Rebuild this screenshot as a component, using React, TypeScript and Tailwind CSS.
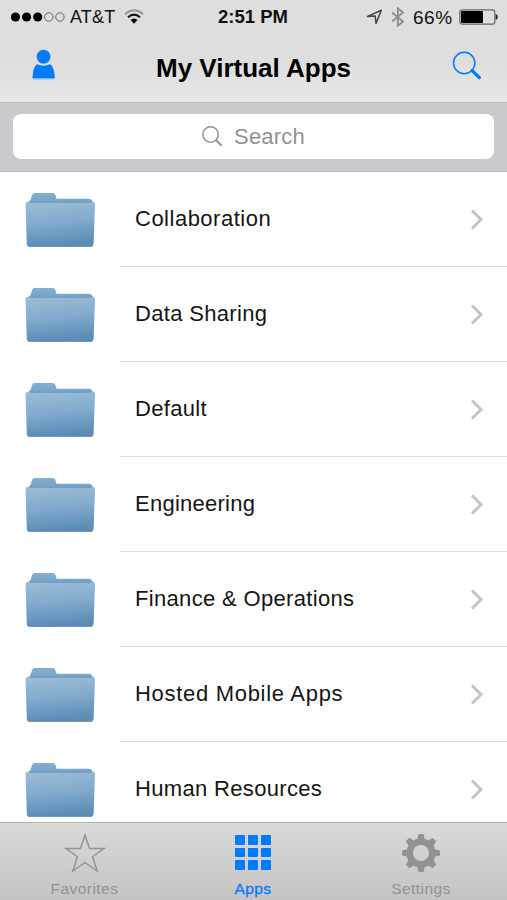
import type { ReactNode } from 'react'

const folders = [
  { name: 'Collaboration', tracking: 'tracking-[0.5px]' },
  { name: 'Data Sharing', tracking: 'tracking-[0.33px]' },
  { name: 'Default', tracking: 'tracking-[0.33px]' },
  { name: 'Engineering', tracking: 'tracking-[0.25px]' },
  { name: 'Finance & Operations', tracking: 'tracking-[0.33px]' },
  { name: 'Hosted Mobile Apps', tracking: 'tracking-[0.7px]' },
  { name: 'Human Resources', tracking: 'tracking-[0.33px]' },
]

const gearTeeth = [0, 45, 90, 135, 180, 225, 270, 315]

const gridCells = [0, 1, 2, 3, 4, 5, 6, 7, 8]

function FolderIcon() {
  return (
    <svg width="72" height="58" viewBox="0 0 72 58" className="shrink-0">
      <defs>
        <linearGradient id="folderFront" x1="0" y1="0" x2="0.15" y2="1">
          <stop offset="0" stopColor="#9dbdd6" />
          <stop offset="0.5" stopColor="#82abce" />
          <stop offset="1" stopColor="#5b8db8" />
        </linearGradient>
        <linearGradient id="folderBack" x1="0" y1="0" x2="0" y2="1">
          <stop offset="0" stopColor="#84afd1" />
          <stop offset="1" stopColor="#6999c0" />
        </linearGradient>
      </defs>
      <path d="M3 12 L6.5 9 L8 4.2 Q8.6 2 10.5 2 H29 Q31.2 2 31.6 4.5 L32.5 7.7 H65 Q67.3 7.7 68 9.5 L70 12 V18 H3Z" fill="url(#folderBack)" />
      <path d="M1.5 13 Q1.5 11 3.5 11 H68.8 Q71.2 11 71 13 L69.6 53 Q69.3 55.7 67 55.7 H5.5 Q3 55.7 2.8 53Z" fill="url(#folderFront)" />
      <path d="M6 11.3 H67" stroke="#6595bd" strokeWidth="0.9" />
      <path d="M4.5 55 H68.2" stroke="#6287a7" strokeWidth="1" />
    </svg>
  )
}

function StatusBar() {
  return (
    <div className="flex h-[34px] items-center text-[18px] leading-none text-[#111]">
      <svg width="54" height="12" viewBox="0 0 54 12" className="ml-[11px] shrink-0">
        <circle cx="4.5" cy="6" r="4.6" fill="#000" />
        <circle cx="15.6" cy="6" r="4.6" fill="#000" />
        <circle cx="26.7" cy="6" r="4.6" fill="#000" />
        <circle cx="37.8" cy="6" r="4.2" fill="none" stroke="#666" />
        <circle cx="48.9" cy="6" r="4.2" fill="none" stroke="#666" />
      </svg>
      <span className="ml-[5px] w-[54px] tracking-[0.2px]">AT&amp;T</span>
      <svg width="20" height="16" viewBox="0 0 20 16" className="shrink-0" fill="none">
        <path d="M1 5.2 Q10 -2.6 19 5.2" stroke="#999" strokeWidth="2" />
        <path d="M4 8.3 Q10 3 16 8.3" stroke="#111" strokeWidth="2.2" />
        <path d="M6.5 11 Q10 8 13.5 11 L10 14.7Z" fill="#000" />
      </svg>
      <span className="ml-[74px] w-[148px] text-[18.5px] font-bold">2:51 PM</span>
      <svg width="17" height="16" viewBox="0 0 17 16" className="shrink-0" fill="none">
        <path d="M1.5 7.4 L15.3 1.2 L10 14.5 L9.2 6.9Z" stroke="#444" strokeWidth="1.5" strokeLinejoin="round" />
      </svg>
      <svg width="14" height="20" viewBox="0 0 14 20" className="ml-[8px] shrink-0" fill="none">
        <path d="M1 5.5 L12 14.5 L6.8 18.8 V1.2 L12 5.5 L1 14.5" stroke="#8d8d8d" strokeWidth="1.8" />
      </svg>
      <span className="ml-[8px] w-[46px] text-[19px] tracking-[0.5px]">66%</span>
      <svg width="39" height="16" viewBox="0 0 39 16" className="shrink-0">
        <rect x="0.8" y="0.8" width="35" height="14.4" rx="2.2" fill="none" stroke="#666" strokeWidth="1.2" />
        <rect x="2" y="2" width="22" height="12" rx="1" fill="#000" />
        <path d="M36.6 5 Q38.8 5.5 38.8 8 Q38.8 10.5 36.6 11Z" fill="#222" />
      </svg>
    </div>
  )
}

function NavBar() {
  return (
    <div className="grid flex-1 grid-cols-[80px_1fr_80px] items-center pb-px">
      <svg width="24" height="32" viewBox="0 0 24 32" className="mb-[5px] ml-[32px]">
        <ellipse cx="11.6" cy="7.8" rx="6.9" ry="7" fill="#007aff" />
        <path d="M5 15.3 Q11.6 18 18.2 15.3 Q21.2 17.5 22.1 22.5 L23 29.6 H0.4 L1.2 22.5 Q2 17.5 5 15.3Z" fill="#007aff" />
        <path d="M1 30.5 H22.5" stroke="#a9d3f5" strokeWidth="1.4" />
      </svg>
      <h1 className="text-center text-[26px] leading-none font-bold whitespace-nowrap text-black">My Virtual Apps</h1>
      <svg width="30" height="30" viewBox="0 0 30 30" className="mb-[4px] ml-[25px]" fill="none" stroke="#007aff">
        <circle cx="12.2" cy="12" r="10.7" strokeWidth="1.5" />
        <path d="M20 19.5 L27.4 26.7" strokeWidth="3.2" strokeLinecap="round" />
      </svg>
    </div>
  )
}

function SearchBar() {
  return (
    <div className="h-[70px] shrink-0 border-y border-[#bdbdbe] bg-[#c9c9ce] px-[13px] pt-[11px]">
      <div className="flex h-[45px] items-center justify-center rounded-lg bg-white text-[22px] leading-none text-[#929292]">
        <svg width="21" height="21" viewBox="0 0 21 21" className="mr-[11px] shrink-0" fill="none" stroke="#929292">
          <circle cx="8.6" cy="8.5" r="7.7" strokeWidth="1.5" />
          <path d="M14 14 L19.6 19.6" strokeWidth="2" />
        </svg>
        <span className="tracking-[0.2px]">Search</span>
      </div>
    </div>
  )
}

function FolderRow({ name, tracking }: { name: string; tracking: string }) {
  return (
    <li className="flex h-[95px] shrink-0 items-stretch pl-[24px]">
      <div className="flex w-[96px] shrink-0 items-center">
        <FolderIcon />
      </div>
      <div className="flex flex-1 items-center justify-between border-b border-[#dbdbdd] pr-[23px] pl-[15px]">
        <span className={`text-[22px] leading-none text-[#151515] ${tracking}`}>{name}</span>
        <svg width="14" height="22" viewBox="0 0 14 22" fill="none">
          <path d="M2 2.5 L11 11.5 L2 20.5" stroke="#c4c4c6" strokeWidth="3" />
        </svg>
      </div>
    </li>
  )
}

function Tab({ label, active, children }: { label: string; active?: boolean; children: ReactNode }) {
  return (
    <div className={active ? 'flex flex-col items-center text-[#007aff]' : 'flex flex-col items-center text-[#929292]'}>
      <div className="flex h-[59px] items-center">{children}</div>
      <span className={active ? 'text-[15.5px] leading-[14px] tracking-[0.4px] [-webkit-text-stroke:0.3px]' : 'text-[15.5px] leading-[14px] tracking-[0.45px]'}>
        {label}
      </span>
    </div>
  )
}

function TabBar() {
  return (
    <div className="grid h-[78px] shrink-0 grid-cols-[169px_168px_168px] border-t border-[#b0b0b0] bg-linear-to-b from-[#dadada] to-[#c4c4c4]">
      <Tab label="Favorites">
        <svg width="42" height="40" viewBox="0 0 42 40" fill="none">
          <path
            d="M21 2 L25.5 15.5 H40 L28.6 23.8 L33.2 38 L21 29.5 L8.8 38 L13.4 23.8 L2 15.5 H16.5Z"
            stroke="#929292"
            strokeWidth="1.4"
          />
        </svg>
      </Tab>
      <Tab label="Apps" active>
        <div className="grid grid-cols-3 gap-[3px]">
          {gridCells.map((cell) => (
            <div key={cell} className="size-[9.7px] rounded-[1px] bg-[#007aff]" />
          ))}
        </div>
      </Tab>
      <Tab label="Settings">
        <svg width="40" height="40" viewBox="0 0 40 40">
          <circle cx="20" cy="20" r="11.3" fill="none" stroke="#929292" strokeWidth="6.6" />
          {gearTeeth.map((angle) => (
            <path key={angle} d="M16.2 7 L17.2 1.8 Q17.4 1 18.2 1 H21.8 Q22.6 1 22.8 1.8 L23.8 7Z" fill="#929292" transform={`rotate(${angle} 20 20)`} />
          ))}
        </svg>
      </Tab>
    </div>
  )
}

export default function App() {
  return (
    <div className="flex h-[900px] w-[507px] flex-col overflow-hidden bg-white font-['Liberation_Sans',Arial,sans-serif]">
      <header className="flex h-[102px] shrink-0 flex-col bg-linear-to-b from-[#dedede] from-60% to-[#e8e8e8]">
        <StatusBar />
        <NavBar />
      </header>
      <SearchBar />
      <ul className="flex min-h-0 flex-1 flex-col overflow-hidden">
        {folders.map((folder) => (
          <FolderRow key={folder.name} name={folder.name} tracking={folder.tracking} />
        ))}
      </ul>
      <TabBar />
    </div>
  )
}
